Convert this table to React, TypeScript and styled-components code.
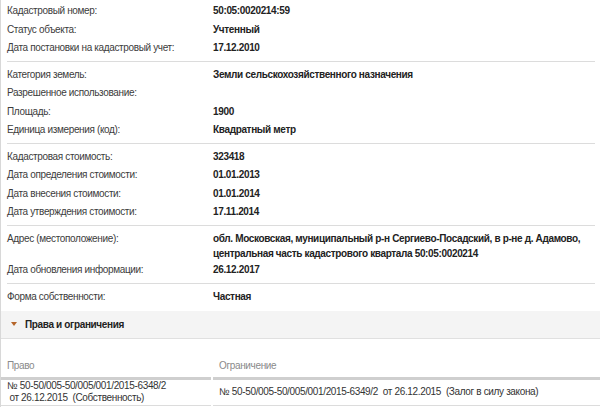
import React from "react"
import styled, { createGlobalStyle } from "styled-components"

const GlobalStyle = createGlobalStyle`
  html, body {
    margin: 0;
    padding: 0;
    background: #fff;
  }
  body {
    font-family: "Liberation Sans", Arial, sans-serif;
    font-size: 10px;
    letter-spacing: -0.35px;
    color: #333;
  }
`

type Field = { label: string; value: string | string[] }

const groups: Field[][] = [
  [
    { label: "Кадастровый номер:", value: "50:05:0020214:59" },
    { label: "Статус объекта:", value: "Учтенный" },
    { label: "Дата постановки на кадастровый учет:", value: "17.12.2010" },
  ],
  [
    { label: "Категория земель:", value: "Земли сельскохозяйственного назначения" },
    { label: "Разрешенное использование:", value: "" },
    { label: "Площадь:", value: "1900" },
    { label: "Единица измерения (код):", value: "Квадратный метр" },
  ],
  [
    { label: "Кадастровая стоимость:", value: "323418" },
    { label: "Дата определения стоимости:", value: "01.01.2013" },
    { label: "Дата внесения стоимости:", value: "01.01.2014" },
    { label: "Дата утверждения стоимости:", value: "17.11.2014" },
  ],
  [
    {
      label: "Адрес (местоположение):",
      value: [
        "обл. Московская, муниципальный р-н Сергиево-Посадский, в р-не д. Адамово,",
        "центральная часть кадастрового квартала 50:05:0020214",
      ],
    },
    { label: "Дата обновления информации:", value: "26.12.2017" },
  ],
  [{ label: "Форма собственности:", value: "Частная" }],
]

export default function App() {
  return (
    <Page>
      <GlobalStyle />
      <Info>
        {groups.map((group, gi) => (
          <Group key={gi} first={gi === 0} last={gi === groups.length - 1}>
            {group.map(f => {
              const multi = Array.isArray(f.value)
              return (
                <Row key={f.label} multiline={multi}>
                  <Label>{f.label}</Label>
                  <Value>
                    {Array.isArray(f.value)
                      ? f.value.map(line => <div key={line}>{line}</div>)
                      : f.value}
                  </Value>
                </Row>
              )
            })}
          </Group>
        ))}
      </Info>

      <SectionHeader>
        <Caret />
        <SectionTitle>Права и ограничения</SectionTitle>
      </SectionHeader>

      <Table>
        <thead>
          <tr>
            <Th>Право</Th>
            <Th>Ограничение</Th>
          </tr>
        </thead>
        <tbody>
          <tr>
            <Td>
              № 50-50/005-50/005/001/2015-6348/2
              <br />
              &nbsp;от 26.12.2015&nbsp; (Собственность)
            </Td>
            <Td>
              № 50-50/005-50/005/001/2015-6349/2&nbsp; от 26.12.2015&nbsp; (Залог в силу закона)
            </Td>
          </tr>
        </tbody>
      </Table>
    </Page>
  )
}

const Page = styled.div`
  width: 600px;
  height: 407px;
  overflow: hidden;
  border-left: 1px solid #d8d8d8;
  box-sizing: border-box;
`

const Info = styled.div`
  padding: 2px 5px 0 6px;
`

const Group = styled.div<{ first?: boolean; last?: boolean }>`
  padding: ${props => (props.first ? "0" : "3.5px")} 0 3.5px;
  border-bottom: ${props => (props.last ? "none" : "1px solid #dcdcdc")};
`

const Row = styled.div<{ multiline?: boolean }>`
  display: grid;
  grid-template-columns: 206px 1fr;
  padding: ${props => (props.multiline ? "2.5px 0 0" : "2px 0")};
  line-height: 14.5px;
`

const Label = styled.div`
  color: #3c3c3c;
  white-space: nowrap;
`

const Value = styled.div`
  font-weight: bold;
  color: #222;
  white-space: nowrap;
`

const SectionHeader = styled.div`
  display: flex;
  align-items: center;
  gap: 8px;
  height: 27px;
  margin-top: 1px;
  padding-left: 10px;
  background: #f4f4f4;
  border-bottom: 1px solid #e0e0e0;
`

const Caret = styled.span`
  width: 0;
  height: 0;
  border-left: 3.5px solid transparent;
  border-right: 3.5px solid transparent;
  border-top: 4px solid #b5652a;
`

const SectionTitle = styled.span`
  font-weight: bold;
  color: #222;
`

const Table = styled.table`
  border-collapse: separate;
  border-spacing: 2px 0;
  margin: 0 -2px;
  width: calc(100% + 4px);
  table-layout: fixed;
`

const Th = styled.th`
  text-align: left;
  font-weight: normal;
  color: #8a8a8a;
  padding: 20px 6px 4px;
  border-bottom: 3px solid #cfcfcf;
  line-height: 14px;
  &:first-child {
    width: 198px;
  }
`

const Td = styled.td`
  padding: 0 6px 1px;
  line-height: 12px;
  color: #333;
  vertical-align: middle;
  border-bottom: 1px solid #dcdcdc;
  white-space: nowrap;
`
